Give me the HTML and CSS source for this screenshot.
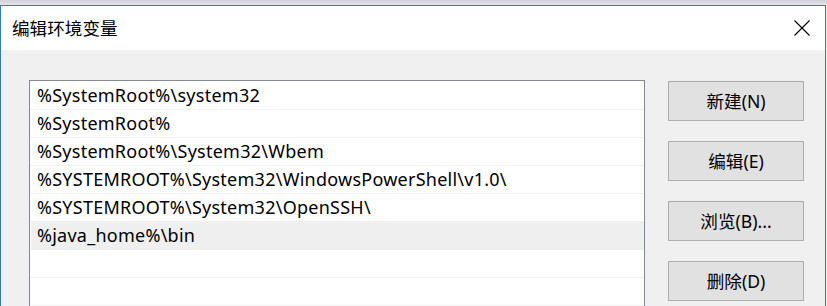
FILE: index.html
```
<!DOCTYPE html>
<html lang="zh-CN">
<head>
<meta charset="utf-8">
<title>编辑环境变量</title>
<link rel="stylesheet" href="styles.css">
</head>
<body>
<div class="window">
  <div class="titlebar">
    <span class="title">编辑环境变量</span>
    <svg class="close" width="16" height="16" viewBox="0 0 16 16" aria-hidden="true">
      <path d="M0.5 0.5 L15.5 15.5 M15.5 0.5 L0.5 15.5" stroke="#000" stroke-width="1.1" fill="none"/>
    </svg>
  </div>
  <div class="content">
    <div class="list">
      <div class="row">%SystemRoot%\system32</div>
      <div class="row">%SystemRoot%</div>
      <div class="row">%SystemRoot%\System32\Wbem</div>
      <div class="row">%SYSTEMROOT%\System32\WindowsPowerShell\v1.0\</div>
      <div class="row">%SYSTEMROOT%\System32\OpenSSH\</div>
      <div class="row row-selected">%java_home%\bin</div>
      <div class="row"></div>
      <div class="row"></div>
    </div>
    <div class="buttons">
      <button class="btn">新建(N)</button>
      <button class="btn">编辑(E)</button>
      <button class="btn">浏览(B)...</button>
      <button class="btn">删除(D)</button>
    </div>
  </div>
</div>
</body>
</html>
```
FILE: styles.css
```
html, body {
  margin: 0;
  padding: 0;
}
body {
  width: 827px;
  height: 306px;
  overflow: hidden;
  background: linear-gradient(#d2d2d2, #e4e4e4 5px, #eeeeee 5px);
  font-family: "Noto Sans", "Noto Sans CJK SC", sans-serif;
  color: #000;
}
.window {
  margin-top: 5px;
  width: 826px;
  height: 301px;
  box-sizing: border-box;
  border: 1px solid #2f7cc4;
  border-bottom: none;
  background: #f0f0f0;
  overflow: hidden;
  display: flex;
  flex-direction: column;
}
.titlebar {
  height: 44px;
  flex: none;
  background: #fff;
  display: flex;
  align-items: center;
  justify-content: space-between;
  padding: 0 15px 0 11px;
}
.title {
  font-family: "Noto Sans CJK SC", sans-serif;
  font-size: 17.6px;
  line-height: 24px;
}
.close {
  display: block;
}
.content {
  flex: 1;
  min-height: 0;
  overflow: hidden;
  display: flex;
  align-items: flex-start;
  gap: 23px;
  padding: 30px 0 0 28px;
}
.list {
  width: 616px;
  height: 240px;
  flex: none;
  box-sizing: border-box;
  border: 1px solid #828790;
  border-bottom: none;
  background: #fff;
  padding-top: 1px;
  overflow: hidden;
}
.row {
  height: 28px;
  box-sizing: border-box;
  border-bottom: 1px solid #efefef;
  padding-left: 7px;
  font-size: 18px;
  line-height: 27px;
  letter-spacing: 0.25px;
  white-space: nowrap;
}
.row-selected {
  background: #efefef;
  margin-left: 1px;
  padding-left: 6px;
}
.buttons {
  display: flex;
  flex-direction: column;
  gap: 20px;
  margin-top: 1px;
}
.btn {
  width: 136px;
  height: 40px;
  box-sizing: border-box;
  border: 1px solid #adadad;
  background: #e1e1e1;
  font-family: "Noto Sans", "Noto Sans CJK SC", sans-serif;
  font-size: 17.6px;
  color: #000;
  padding: 0;
  margin: 0;
  line-height: 24px;
}
```
